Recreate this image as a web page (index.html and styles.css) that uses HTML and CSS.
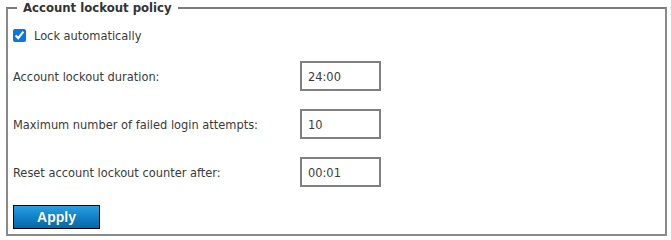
FILE: index.html
```html
<!DOCTYPE html>
<html lang="en">
<head>
<meta charset="utf-8">
<title>Account lockout policy</title>
<link rel="stylesheet" href="styles.css">
</head>
<body>
<fieldset class="panel">
  <legend class="panel-title">Account lockout policy</legend>
  <div class="content">
    <label class="check-row">
      <input type="checkbox" class="check" checked>
      <span>Lock automatically</span>
    </label>
    <div class="field-row">
      <span class="field-label">Account lockout duration:</span>
      <input type="text" class="field-input" value="24:00">
    </div>
    <div class="field-row">
      <span class="field-label">Maximum number of failed login attempts:</span>
      <input type="text" class="field-input" value="10">
    </div>
    <div class="field-row">
      <span class="field-label">Reset account lockout counter after:</span>
      <input type="text" class="field-input" value="00:01">
    </div>
    <div class="actions">
      <button type="button" class="btn-apply">Apply</button>
    </div>
  </div>
</fieldset>
</body>
</html>
```
FILE: styles.css
```css
html, body {
  margin: 0;
  padding: 0;
  background: #ffffff;
}
body {
  font-family: "DejaVu Sans Condensed", "Noto Sans", sans-serif;
  font-size: 12.7px;
  color: #3a3a3a;
}
.panel {
  margin: 0 4px 0 6px;
  padding: 0 5px 5px 5px;
  border: 2px solid #8a8a8a;
  border-top-color: #7a7a7a;
  min-width: 0;
}
.panel-title {
  padding: 0 6px 0 6px;
  margin-left: 4px;
  font-size: 13px;
  line-height: 16px;
  font-weight: bold;
  color: #333333;
}
.content {
  display: flex;
  flex-direction: column;
  gap: 18px;
  padding-top: 11px;
}
.check-row {
  display: flex;
  align-items: center;
  height: 16px;
  gap: 8px;
}
.check {
  margin: 0;
  width: 13px;
  height: 13px;
  accent-color: #0b74e6;
}
.field-row {
  display: flex;
  align-items: center;
  height: 30px;
}
.field-label {
  width: 287px;
  flex: none;
}
.field-input {
  box-sizing: border-box;
  width: 81px;
  height: 30px;
  margin: 0;
  padding: 0 6px;
  border: 2px solid #808080;
  font-family: "DejaVu Sans Condensed", "Noto Sans", sans-serif;
  font-size: 12.7px;
  color: #3a3a3a;
  background: #fff;
  outline: none;
}
.actions {
  display: flex;
}
.btn-apply {
  box-sizing: border-box;
  width: 87px;
  height: 24px;
  margin: 0;
  padding: 0;
  border: 1px solid #000;
  background: linear-gradient(#2aa0e2, #0f7fc4 55%, #0a67a8);
  color: #ffffff;
  font-family: "Liberation Sans", Arial, sans-serif;
  font-size: 14px;
  font-weight: bold;
  text-shadow: 0 0 1px rgba(0,0,0,0.3);
}
```
